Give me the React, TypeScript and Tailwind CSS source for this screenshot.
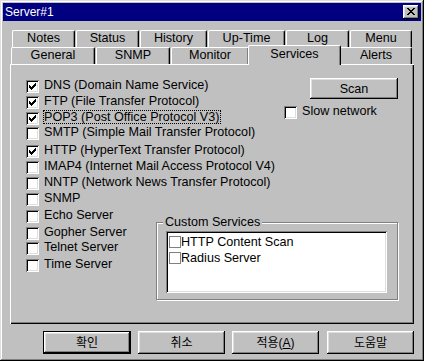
import React from "react";

const CHECK_D =
  "M9 3h1v1h-1z M8 4h2v1h-2z M3 5h1v1h-1z M7 5h3v1h-3z M3 6h2v1h-2z M6 6h3v1h-3z M3 7h5v1h-5z M4 8h3v1h-3z M5 9h1v1h-1z";

const X_D =
  "M4 3h2v1h-2z M10 3h2v1h-2z M5 4h2v1h-2z M9 4h2v1h-2z M6 5h4v1h-4z M7 6h2v1h-2z M6 7h4v1h-4z M5 8h2v1h-2z M9 8h2v1h-2z M4 9h2v1h-2z M10 9h2v1h-2z";

function Check({ checked }: { checked?: boolean }) {
  return (
    <div className="w-[13px] h-[13px] shrink-0 bg-white shadow-[inset_1px_1px_#808080,inset_-1px_-1px_#fff,inset_2px_2px_#000,inset_-2px_-2px_#dfdfdf]">
      {checked && (
        <svg width="13" height="13" viewBox="0 0 13 13" shapeRendering="crispEdges" className="block">
          <path d={CHECK_D} fill="#000" />
        </svg>
      )}
    </div>
  );
}

function Row({
  label,
  checked,
  focus,
  h,
}: {
  label: string;
  checked?: boolean;
  focus?: boolean;
  h: string;
}) {
  return (
    <div className={`flex items-start ${h}`}>
      <Check checked={checked} />
      <span
        className={`ml-[4px] -mt-[2px] border leading-[12px] pr-[1px] whitespace-nowrap ${
          focus ? "border-dotted border-black" : "border-transparent"
        }`}
      >
        {label}
      </span>
    </div>
  );
}

function Tab({ label, w, selected }: { label: string; w: string; selected?: boolean }) {
  return (
    <div
      className={`${w} ${
        selected
          ? "relative z-10 h-[20px] -mt-[2px] -ml-[2px] -mr-[1px] pt-[1px] bg-[#c0c0c0]"
          : "h-[17px] mr-[1px]"
      } shrink-0 flex items-start justify-center border-t border-l border-r border-white border-r-black rounded-t-[2px] shadow-[inset_-1px_0_#808080] leading-[14px]`}
    >
      {label}
    </div>
  );
}

const bevel =
  "shadow-[inset_-1px_-1px_#000,inset_1px_1px_#fff,inset_-2px_-2px_#808080,inset_2px_2px_#dfdfdf]";

export default function App() {
  return (
    <div className="w-[424px] h-[361px] bg-[#c0c0c0] p-[3px] flex flex-col text-black text-[12.6px] font-['Liberation_Sans','Noto_Sans_CJK_KR',sans-serif] shadow-[inset_-1px_-1px_#000,inset_1px_1px_#dfdfdf,inset_-2px_-2px_#808080,inset_2px_2px_#fff]">
      {/* Title bar */}
      <div className="h-[18px] bg-[#000080] flex items-center justify-between pl-[2px] pr-[2px]">
        <span className="text-white text-[12px] leading-[16px]">Server#1</span>
        <div className={`w-[16px] h-[14px] bg-[#c0c0c0] ${bevel}`}>
          <svg width="16" height="14" viewBox="0 0 16 14" shapeRendering="crispEdges" className="block">
            <path d={X_D} fill="#000" />
          </svg>
        </div>
      </div>

      {/* Tabs row 1 */}
      <div className="mt-[9px] ml-[9px] flex h-[17px]">
        <Tab label="Notes" w="w-[63px]" />
        <Tab label="Status" w="w-[63px]" />
        <Tab label="History" w="w-[67px]" />
        <Tab label="Up-Time" w="w-[77px]" />
        <Tab label="Log" w="w-[63px]" />
        <Tab label="Menu" w="w-[62px]" />
      </div>
      {/* Tabs row 2 */}
      <div className="ml-[8px] flex items-start h-[17px]">
        <Tab label="General" w="w-[84px]" />
        <Tab label="SNMP" w="w-[74px]" />
        <Tab label="Monitor" w="w-[78px]" />
        <Tab label="Services" w="w-[93px]" selected />
        <Tab label="Alerts" w="w-[72px]" />
      </div>

      {/* Panel */}
      <div className="ml-[7px] w-[404px] h-[260px] grid shadow-[inset_1px_1px_#fff,inset_-1px_-1px_#000,inset_-2px_-2px_#808080]">
        <div className="col-start-1 row-start-1 pl-[16px] pt-[16px] flex flex-col">
          <Row h="h-[16px]" label="DNS (Domain Name Service)" checked />
          <Row h="h-[16px]" label="FTP (File Transfer Protocol)" checked />
          <Row h="h-[15px]" label="POP3 (Post Office Protocol V3)" checked focus />
          <Row h="h-[18px]" label="SMTP (Simple Mail Transfer Protocol)" />
          <Row h="h-[16px]" label="HTTP (HyperText Transfer Protocol)" checked />
          <Row h="h-[16px]" label="IMAP4 (Internet Mail Access Protocol V4)" />
          <Row h="h-[16px]" label="NNTP (Network News Transfer Protocol)" />
          <Row h="h-[17px]" label="SNMP" />
          <Row h="h-[17px]" label="Echo Server" />
          <Row h="h-[15px]" label="Gopher Server" />
          <Row h="h-[17px]" label="Telnet Server" />
          <Row h="h-[16px]" label="Time Server" />
        </div>

        <div className="col-start-1 row-start-1 ml-[146px] w-[242px] flex flex-col">
          <div
            className={`mt-[14px] ml-[154px] w-[88px] h-[21px] flex items-center justify-center leading-[14px] ${bevel}`}
          >
            Scan
          </div>
          <div className="mt-[7px] ml-[128px]">
            <Row h="h-[13px]" label="Slow network" />
          </div>
          <div className="relative mt-[103px] w-[242px] h-[78px] border border-[#808080] shadow-[inset_1px_1px_#fff,1px_1px_#fff]">
            <span className="absolute left-[6px] top-[-8px] px-[2px] bg-[#c0c0c0] leading-[14px] whitespace-nowrap">
              Custom Services
            </span>
            <div className="mt-[8px] ml-[9px] w-[221px] h-[62px] bg-white p-[2px] shadow-[inset_1px_1px_#808080,inset_-1px_-1px_#fff,inset_2px_2px_#000,inset_-2px_-2px_#dfdfdf]">
              <div className="pt-[1px] pl-[1px] flex flex-col">
                {["HTTP Content Scan", "Radius Server"].map((t) => (
                  <div key={t} className="h-[16px] flex items-start">
                    <div className="mt-[2px] w-[12px] h-[12px] shrink-0 border border-[#808080] bg-white" />
                    <span className="mt-[1px] leading-[15px] whitespace-nowrap">{t}</span>
                  </div>
                ))}
              </div>
            </div>
          </div>
        </div>
      </div>

      {/* Buttons */}
      <div className="mt-[7px] flex h-[23px] text-[12px]">
        <div
          className={`ml-[40px] w-[88px] h-[23px] border border-black flex items-center justify-center ${bevel}`}
        >
          확인
        </div>
        <div className={`ml-[7px] w-[87px] h-[23px] flex items-center justify-center ${bevel}`}>취소</div>
        <div className={`ml-[7px] w-[87px] h-[23px] flex items-center justify-center ${bevel}`}>
          적용(<span className="underline">A</span>)
        </div>
        <div className={`ml-[8px] w-[87px] h-[23px] flex items-center justify-center ${bevel}`}>도움말</div>
      </div>
    </div>
  );
}
